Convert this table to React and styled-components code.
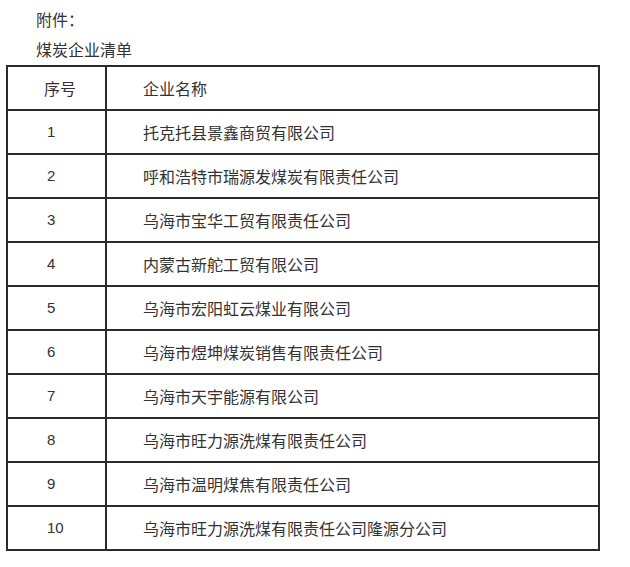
import React from "react"
import styled, { createGlobalStyle } from "styled-components"

const GlobalStyle = createGlobalStyle`
  html, body {
    margin: 0;
    padding: 0;
    background: #fff;
  }
  body {
    font-family: "Noto Sans CJK SC", "Noto Sans", sans-serif;
    color: #333;
  }
`

// Styles
const Page = styled.div`
  width: 630px;
  height: 567px;
  padding-top: 4px;
  box-sizing: border-box;
`
const Caption = styled.p`
  margin: 0;
  padding-left: 36px;
  font-size: 16px;
  line-height: 30px;
  height: 30px;
`
const Table = styled.table`
  margin: 1px 0 0 6px;
  width: 594px;
  border-collapse: collapse;
  font-size: 16px;
  color: #333;
`
const Cell = styled.td`
  border: 2px solid #2b2b2b;
  height: 44px;
  padding: 0 0 0 36px;
  box-sizing: border-box;
  text-align: left;
  vertical-align: middle;
  white-space: nowrap;
  font-weight: normal;
  line-height: 20px;
`
const NumCell = styled(Cell)`
  width: 99px;
  padding-left: 39px;
  font-family: "Liberation Sans", "Noto Sans", sans-serif;
  font-size: 15px;
`

const companies = [
  "托克托县景鑫商贸有限公司",
  "呼和浩特市瑞源发煤炭有限责任公司",
  "乌海市宝华工贸有限责任公司",
  "内蒙古新舵工贸有限公司",
  "乌海市宏阳虹云煤业有限公司",
  "乌海市煜坤煤炭销售有限责任公司",
  "乌海市天宇能源有限公司",
  "乌海市旺力源洗煤有限责任公司",
  "乌海市温明煤焦有限责任公司",
  "乌海市旺力源洗煤有限责任公司隆源分公司",
]

const App = () => {
  return (
    <Page>
      <GlobalStyle />
      <Caption>附件：</Caption>
      <Caption>煤炭企业清单</Caption>
      <Table>
        <tbody>
          <tr>
            <Cell as="th" style={{ width: 99 }}>序号</Cell>
            <Cell as="th">企业名称</Cell>
          </tr>
          {companies.map((name, i) => (
            <tr key={name}>
              <NumCell>{i + 1}</NumCell>
              <Cell>{name}</Cell>
            </tr>
          ))}
        </tbody>
      </Table>
    </Page>
  )
}

export default App
